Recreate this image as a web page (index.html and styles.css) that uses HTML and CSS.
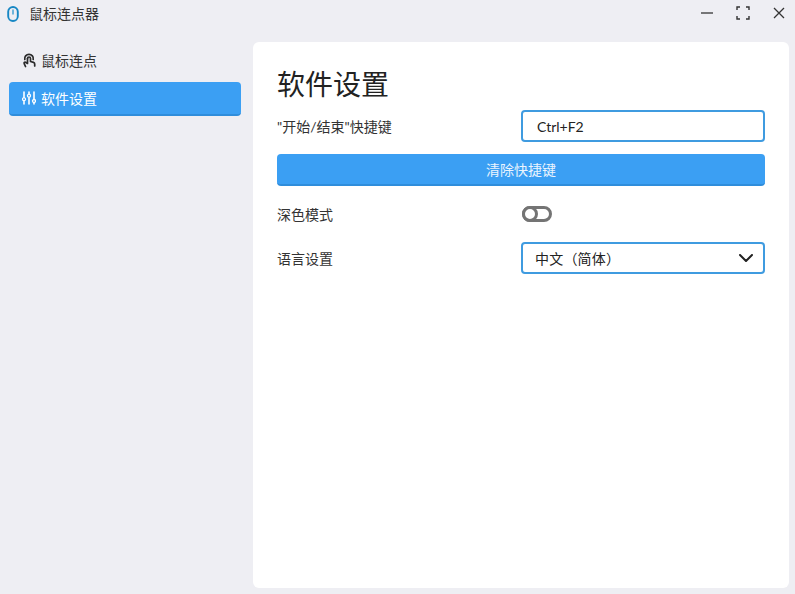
FILE: index.html
```html
<!DOCTYPE html>
<html lang="zh-CN">
<head>
    <meta charset="UTF-8">
    <meta name="viewport" content="width=device-width, initial-scale=1.0">
    <title>鼠标连点器</title>
    <link rel="stylesheet" href="styles.css">
</head>
<body>
    <div class="window">
        <header class="titlebar">
            <svg class="app-icon" viewBox="0 0 12 16" width="12" height="16" fill="none">
                <rect x="1.2" y="1" width="9.6" height="14" rx="4.8" stroke="#1787c4" stroke-width="1.9"/>
                <path d="M6 4.2v3.600" stroke="#6fb4da" stroke-width="2" stroke-linecap="round"/>
            </svg>
            <span class="app-title">鼠标连点器</span>
            <div class="window-controls">
                <svg viewBox="0 0 14 14" width="14" height="14" fill="none" stroke="#333" stroke-width="1.3">
                    <path d="M1 7h12"/>
                </svg>
                <svg viewBox="0 0 14 14" width="14" height="14" fill="none" stroke="#333" stroke-width="1.4">
                    <path d="M1 4V1h3M10 1h3v3M13 10v3h-3M4 13H1v-3"/>
                </svg>
                <svg viewBox="0 0 14 14" width="14" height="14" fill="none" stroke="#333" stroke-width="1.3">
                    <path d="M2 2l10 10M12 2L2 12"/>
                </svg>
            </div>
        </header>

        <div class="main">
            <nav class="sidebar">
                <a class="nav-item">
                    <svg viewBox="0 0 14 16" width="14" height="16" fill="none" stroke="#2b2b2b" stroke-width="1.7" stroke-linecap="round" stroke-linejoin="round">
                        <path d="M2.8 7.5a4.3 4.3 0 1 1 8.4 0"/>
                        <path d="M5.5 6.5a1.5 1.5 0 1 1 3 0v3l3 .9c.8.3 1.2.9 1.2 1.6v2"/>
                        <path d="M5.5 6.5v5L3.5 10.3c-.8-.4-1.800.4-1.300 1.300L3.5 14.5"/>
                    </svg>
                    <span>鼠标连点</span>
                </a>
                <a class="nav-item active">
                    <svg viewBox="0 0 14 14" width="14" height="14" fill="none" stroke="#fff" stroke-width="1.6" stroke-linecap="round">
                        <path d="M2 1v5M2 10.500V13M7 1v1.500M7 7V13M12 1v7M12 12v1"/>
                        <circle cx="2" cy="8.2" r="1.5" stroke-width="1.3"/>
                        <circle cx="7" cy="4.7" r="1.5" stroke-width="1.3"/>
                        <circle cx="12" cy="10" r="1.5" stroke-width="1.3"/>
                    </svg>
                    <span>软件设置</span>
                </a>
            </nav>

            <section class="panel">
                <h1>软件设置</h1>

                <div class="row row-hotkey">
                    <label>"开始/结束"快捷键</label>
                    <div class="field">Ctrl+F2</div>
                </div>

                <button class="primary-btn">清除快捷键</button>

                <div class="row row-theme">
                    <label>深色模式</label>
                    <div class="control">
                        <span class="toggle"><span class="knob"></span></span>
                    </div>
                </div>

                <div class="row row-lang">
                    <label>语言设置</label>
                    <div class="field select">
                        <span>中文（简体）</span>
                        <svg viewBox="0 0 14 8" width="14" height="8" fill="none" stroke="#222" stroke-width="2" stroke-linecap="round" stroke-linejoin="round">
                            <path d="M1 1l6 6 6-6"/>
                        </svg>
                    </div>
                </div>
            </section>
        </div>
    </div>
</body>
</html>
```

FILE: styles.css
```css
* {
    box-sizing: border-box;
}

html, body {
    height: 100%;
}

body {
    margin: 0;
    background: #eeeef3;
    color: #222;
    font-family: "Lato", "Noto Sans CJK SC", sans-serif;
    font-size: 14px;
    overflow: hidden;
}

.window {
    display: flex;
    flex-direction: column;
    height: 594px;
}

.titlebar {
    display: flex;
    align-items: center;
    height: 26px;
    padding-left: 7px;
    flex-shrink: 0;
}

.app-icon {
    margin-top: 2px;
    margin-right: 10px;
}

.app-title {
    font-size: 14px;
    color: #333;
}

.window-controls {
    display: flex;
    align-items: center;
    gap: 22px;
    margin-left: auto;
    padding-right: 9px;
}

.main {
    display: flex;
    flex: 1;
    min-height: 0;
    padding: 16px 6px 6px 9px;
}

.sidebar {
    display: flex;
    flex-direction: column;
    gap: 5px;
    width: 232px;
    margin-top: 1px;
    margin-right: 12px;
    flex-shrink: 0;
}

.nav-item {
    display: flex;
    align-items: center;
    gap: 5px;
    height: 34px;
    padding-left: 13px;
    border-radius: 4px;
    font-size: 14px;
    color: #333;
}

.nav-item.active {
    background: #3b9ff3;
    border-bottom: 2px solid #2f8ddb;
    color: #fff;
}

.panel {
    flex: 1;
    padding: 22px 24px;
    background: #fff;
    border-radius: 6px;
}

h1 {
    margin: 0 0 6px;
    font-size: 28px;
    font-weight: 400;
    line-height: 40px;
    color: #222;
}

.row {
    display: grid;
    grid-template-columns: 244px 1fr;
    align-items: center;
}

.row label {
    margin-bottom: 1px;
    font-size: 14px;
    color: #333;
}

.field {
    display: flex;
    align-items: center;
    height: 32px;
    padding-left: 14px;
    border: 2px solid #3f9be0;
    border-radius: 4px;
    background: #fff;
    font-size: 14px;
    color: #222;
}

.select {
    justify-content: space-between;
    padding-left: 12px;
    padding-right: 10px;
    letter-spacing: 0.2px;
}

.primary-btn {
    display: block;
    width: 100%;
    height: 32px;
    margin-top: 12px;
    border: none;
    border-bottom: 2px solid #2f8ddb;
    border-radius: 4px;
    background: #3b9ff3;
    color: #eaf4fe;
    font-family: inherit;
    font-size: 14px;
}

.row-theme {
    margin-top: 12px;
    height: 32px;
}

.row-lang {
    margin-top: 12px;
}

.control {
    padding-left: 1px;
}

.toggle {
    display: block;
    position: relative;
    width: 30px;
    height: 16px;
    border: 3px solid #747474;
    border-radius: 8px;
    background: #fff;
}

/* knob sits over the left end of the track */
.knob {
    position: absolute;
    top: -3px;
    left: -3px;
    width: 16px;
    height: 16px;
    border: 3px solid #747474;
    border-radius: 50%;
    background: #fff;
}
```
